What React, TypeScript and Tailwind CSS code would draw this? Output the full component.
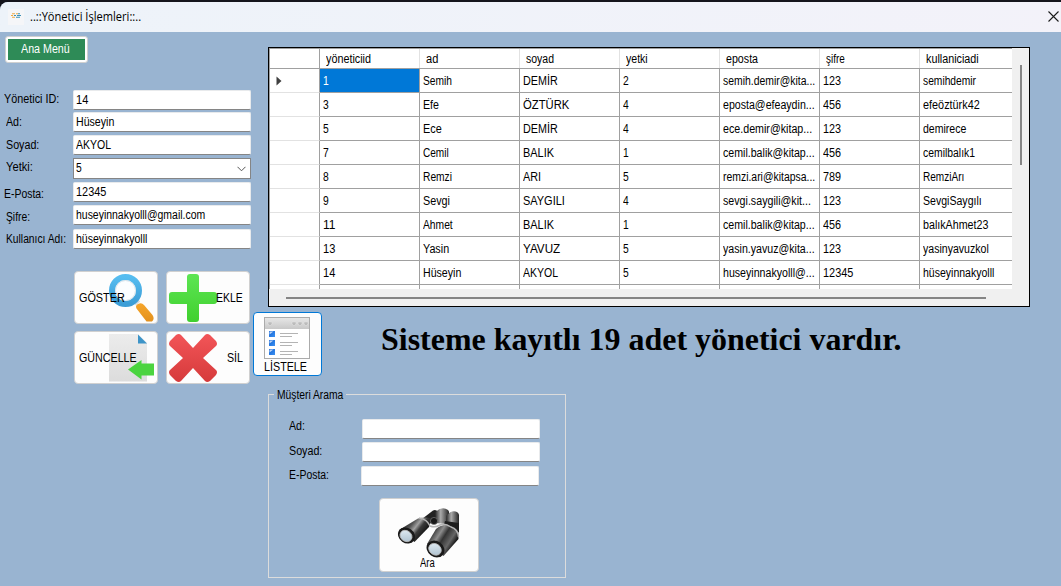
import { useLayoutEffect, useRef, useState } from "react";

/** A label condensed horizontally so that it takes exactly `w` pixels. */
function Label({ w, children, className = "" }: { w: number; children: string; className?: string }) {
  const ref = useRef<HTMLSpanElement>(null);
  const [scale, setScale] = useState(1);
  useLayoutEffect(() => {
    if (ref.current) setScale(w / ref.current.offsetWidth);
  }, [w, children]);
  return (
    <span className={`block ${className}`} style={{ width: w }}>
      <span ref={ref} className="inline-block origin-left whitespace-pre" style={{ transform: `scaleX(${scale})` }}>
        {children}
      </span>
    </span>
  );
}

type Text = [string, number];

const fields: { label: Text; value: Text; labelClass: string; rowClass: string; combo?: boolean }[] = [
  { label: ["Yönetici ID:", 55], value: ["14", 12], labelClass: "pl-1 -mt-px", rowClass: "h-[22px]" },
  { label: ["Ad:", 16], value: ["Hüseyin", 38], labelClass: "pl-1.5", rowClass: "h-[23px]" },
  { label: ["Soyad:", 33], value: ["AKYOL", 35], labelClass: "pl-1.5", rowClass: "h-[23px]" },
  { label: ["Yetki:", 27], value: ["5", 6], labelClass: "pl-1.5 -mt-px", rowClass: "h-6", combo: true },
  { label: ["E-Posta:", 40], value: ["12345", 30], labelClass: "pl-1 mt-0.5", rowClass: "h-[23px]" },
  { label: ["Şifre:", 24], value: ["huseyinnakyolll@gmail.com", 129], labelClass: "pl-1.5 mt-0.5", rowClass: "h-6" },
  { label: ["Kullanıcı Adı:", 60], value: ["hüseyinnakyolll", 71], labelClass: "pl-1.5", rowClass: "h-5" },
];

const headers: Text[] = [
  ["yöneticiid", 45], ["ad", 12], ["soyad", 28], ["yetki", 22], ["eposta", 32], ["şifre", 19], ["kullaniciadi", 53],
];

const rows: Text[][] = [
  [["1", 6], ["Semih", 29], ["DEMİR", 35], ["2", 6], ["semih.demir@kita...", 92], ["123", 18], ["semihdemir", 53]],
  [["3", 6], ["Efe", 16], ["ÖZTÜRK", 46], ["4", 6], ["eposta@efeaydin...", 92], ["456", 18], ["efeöztürk42", 57]],
  [["5", 6], ["Ece", 19], ["DEMİR", 35], ["4", 6], ["ece.demir@kitap...", 89], ["123", 18], ["demirece", 43]],
  [["7", 6], ["Cemil", 26], ["BALIK", 31], ["1", 6], ["cemil.balik@kitap...", 92], ["456", 18], ["cemilbalık1", 52]],
  [["8", 6], ["Remzi", 29], ["ARI", 18], ["5", 6], ["remzi.ari@kitapsa...", 92], ["789", 18], ["RemziArı", 41]],
  [["9", 6], ["Sevgi", 27], ["SAYGILI", 42], ["4", 6], ["sevgi.saygili@kit...", 88], ["123", 18], ["SevgiSaygılı", 59]],
  [["11", 12], ["Ahmet", 30], ["BALIK", 31], ["1", 6], ["cemil.balik@kitap...", 92], ["456", 18], ["balıkAhmet23", 65]],
  [["13", 12], ["Yasin", 26], ["YAVUZ", 37], ["5", 6], ["yasin.yavuz@kita...", 92], ["123", 18], ["yasinyavuzkol", 66]],
  [["14", 12], ["Hüseyin", 38], ["AKYOL", 35], ["5", 6], ["huseyinnakyolll@...", 92], ["12345", 30], ["hüseyinnakyolll", 71]],
];

const gridCols = "grid grid-cols-[50px_100px_100px_100px_100px_100px_100px_100px]";
const inputBox = "h-5 rounded-[2px] border border-[#e8eaec] border-b-[#858585] bg-white";
const buttonBox = "rounded-[4px] border border-[#d0d0d0] bg-[#fdfdfd]";

function Magnifier() {
  return (
    <svg className="absolute left-[34px] top-[2px]" width="45" height="48" viewBox="0 0 45 48">
      <defs>
        <linearGradient id="lens" x1="0" y1="0" x2="0" y2="1">
          <stop offset="0" stopColor="#56bdf0" />
          <stop offset="1" stopColor="#3c9dd6" />
        </linearGradient>
        <linearGradient id="grip" x1="0" y1="0" x2="0" y2="1">
          <stop offset="0" stopColor="#f6a62b" />
          <stop offset="1" stopColor="#e3911e" />
        </linearGradient>
      </defs>
      <path d="M26 26.500L29 29.500" stroke="#d8dcdf" strokeWidth="6" />
      <circle cx="16.500" cy="16.500" r="13.500" fill="#fcfeff" stroke="url(#lens)" strokeWidth="6" />
      <circle cx="16.500" cy="16.500" r="10" fill="none" stroke="#d7e3ea" strokeWidth="1" />
      <path d="M27.500 34.500Q26 31 29 30Q32.500 28 35 31L43.500 41Q46 45 43 47.500H37.500Z" fill="url(#grip)" />
    </svg>
  );
}

function Plus() {
  return (
    <svg className="absolute left-[2px] top-[2px]" width="48" height="48" viewBox="0 0 48 48">
      <defs>
        <linearGradient id="plus" x1="0" y1="0" x2="0" y2="1">
          <stop offset="0" stopColor="#5de553" />
          <stop offset="1" stopColor="#40d02f" />
        </linearGradient>
      </defs>
      <path d="M21 0h6q3 0 3 3v15h15q3 0 3 3v6q0 3-3 3H30v15q0 3-3 3h-6q-3 0-3-3V30H3q-3 0-3-3v-6q0-3 3-3h15V3q0-3 3-3z" fill="url(#plus)" />
    </svg>
  );
}

function PageArrow() {
  return (
    <svg className="absolute left-[34px] top-[2px]" width="45" height="48" viewBox="0 0 45 48">
      <defs>
        <linearGradient id="sheet" x1="0" y1="0" x2="0" y2="1">
          <stop offset="0" stopColor="#ececec" />
          <stop offset="1" stopColor="#dcdcdc" />
        </linearGradient>
      </defs>
      <path d="M0 0H29L38 9V47.500H0Z" fill="url(#sheet)" />
      <path d="M29 .5L38 9.500H29Z" fill="#3d94c8" />
      <path d="M19 35.500L32.500 26V29.500H45V41.500H32.500V45.500Z" fill="#4bd43f" />
    </svg>
  );
}

function Cross() {
  return (
    <svg className="absolute left-[2px] top-[2px]" width="48" height="48" viewBox="0 0 48 48">
      <defs>
        <linearGradient id="cross" x1="0" y1="0" x2="0" y2="1">
          <stop offset="0" stopColor="#f25558" />
          <stop offset="1" stopColor="#d63a3b" />
        </linearGradient>
      </defs>
      <path d="M7 1q3-2 5 0l12 13L36 1q2-2 5 0l6 6q2 3 0 5L34 24l13 12q2 2 0 5l-6 6q-3 2-5 0L24 34 12 47q-2 2-5 0l-6-6q-2-3 0-5l13-12L1 12q-2-2 0-5z" fill="url(#cross)" />
    </svg>
  );
}

function ListIcon() {
  return (
    <svg className="ml-[9px] block" width="48" height="44" viewBox="0 0 48 44">
      <defs>
        <linearGradient id="bar" x1="0" y1="0" x2="0" y2="1">
          <stop offset="0" stopColor="#e6e6e6" />
          <stop offset="1" stopColor="#c8c8c8" />
        </linearGradient>
        <linearGradient id="tick" x1="0" y1="0" x2="1" y2="1">
          <stop offset="0" stopColor="#1263d3" />
          <stop offset="1" stopColor="#3d91f2" />
        </linearGradient>
      </defs>
      <rect x="1.500" y="1.500" width="45" height="41" fill="#fff" stroke="#ababab" />
      <rect x="2" y="2" width="44" height="11" fill="url(#bar)" />
      {[7, 31, 37, 43].map((x) => (
        <path key={x} d={`M${x - 2} 6h4v2l-2 2-2-2z`} fill="#bcbcbc" stroke="#e5e5e5" strokeWidth=".5" />
      ))}
      {[15, 24, 33].map((y) => (
        <g key={y}>
          <rect x="6" y={y} width="6" height="6" fill="url(#tick)" />
          <path d={`M6.500 ${y + 0.5}h4l-4 3z`} fill="#fff" opacity=".7" />
          <path d={`M17 ${y + 2.5}h18`} stroke="#b4b4b4" />
          <path d={`M17 ${y + 5.5}h12`} stroke="#b4b4b4" />
        </g>
      ))}
    </svg>
  );
}

function Binoculars() {
  return (
    <svg className="ml-[17px] block" width="66" height="60" viewBox="0 0 66 60">
      <defs>
        <linearGradient id="barrel" gradientUnits="userSpaceOnUse" x1="5" y1="27" x2="23" y2="41">
          <stop offset="0" stopColor="#222" />
          <stop offset=".3" stopColor="#555" />
          <stop offset=".5" stopColor="#a0a0a0" />
          <stop offset=".68" stopColor="#3a3a3a" />
          <stop offset="1" stopColor="#111" />
        </linearGradient>
        <linearGradient id="barrel2" gradientUnits="userSpaceOnUse" x1="34" y1="34" x2="56" y2="48">
          <stop offset="0" stopColor="#2a2a2a" />
          <stop offset=".3" stopColor="#8d8d8d" />
          <stop offset=".5" stopColor="#333" />
          <stop offset=".78" stopColor="#666" />
          <stop offset="1" stopColor="#111" />
        </linearGradient>
        <linearGradient id="cap" x1="0" y1="0" x2="1" y2="0">
          <stop offset="0" stopColor="#222" />
          <stop offset=".4" stopColor="#aaa" />
          <stop offset="1" stopColor="#222" />
        </linearGradient>
        <linearGradient id="glass" x1="0" y1="0" x2="1" y2="1">
          <stop offset="0" stopColor="#e6f0f7" />
          <stop offset="1" stopColor="#a7bccb" />
        </linearGradient>
      </defs>
      <path d="M25 20L36 11.500Q39 10 41 13L41 21L32 25Z" fill="#222" />
      <path d="M38 13.500Q45 6.500 51 11Q53 13 51.500 17L49 25L39 24Z" fill="url(#cap)" />
      <path d="M49.500 16.500Q55 10.500 60 13Q62.500 14.500 62 18V31L49 27Z" fill="url(#cap)" />
      <path d="M2 31L21 19.500Q28 17.500 34 19.500L32 28L17.500 43Z" fill="url(#barrel)" />
      <path d="M30 45L39 30Q44 25.500 50 26L60 29Q62 34 61.500 40L46.500 57Z" fill="url(#barrel2)" />
      <path d="M48 22L62 24V34Q56 26 47 26Z" fill="#1c1c1c" />
      <path d="M22 19Q30 20 33 27Q38 29 43 26Q48 24 54 28Q61 30 61.500 38" fill="none" stroke="#b5b5b5" strokeWidth="1.500" />
      <circle cx="37" cy="22" r="3.600" fill="#181818" stroke="#777" strokeWidth=".7" />
      <ellipse cx="9.500" cy="36.500" rx="9" ry="7.500" transform="rotate(35 9.500 36.500)" fill="#191919" />
      <ellipse cx="9" cy="37" rx="6.300" ry="5.300" transform="rotate(35 9 37)" fill="url(#glass)" stroke="#bbb" strokeWidth=".8" />
      <ellipse cx="38.500" cy="50" rx="9.500" ry="7.800" transform="rotate(35 38.500 50)" fill="#191919" />
      <ellipse cx="38" cy="50.300" rx="6.600" ry="5.500" transform="rotate(35 38 50.300)" fill="url(#glass)" stroke="#bbb" strokeWidth=".8" />
    </svg>
  );
}

function EditForm() {
  return (
    <div className="mt-[27px]">
      {fields.map(({ label, value, labelClass, rowClass, combo }) => (
        <div key={label[0]} className={`flex ${rowClass}`}>
          <div className={`flex h-5 w-[73px] items-center ${labelClass}`}>
            <Label w={label[1]}>{label[0]}</Label>
          </div>
          {combo ? (
            <div className="flex h-[21px] w-[178px] items-center justify-between border border-[#858585] bg-white pb-px pl-0.5 pr-1">
              <Label w={value[1]}>{value[0]}</Label>
              <svg className="mt-0.5" width="9" height="6" viewBox="0 0 9 6">
                <path d="M.5 .8L4.500 4.800L8.500 .8" fill="none" stroke="#555" />
              </svg>
            </div>
          ) : (
            <div className={`flex w-[178px] items-center pl-0.5 ${inputBox}`}>
              <Label w={value[1]}>{value[0]}</Label>
            </div>
          )}
        </div>
      ))}
    </div>
  );
}

function ActionButtons() {
  const box = `relative h-[53px] w-[84px] ${buttonBox}`;
  return (
    <div className="ml-[74px] mt-[22px] grid w-[176px] grid-cols-2 gap-x-2 gap-y-[7px]">
      <button className={box}>
        <Magnifier />
        <Label w={46} className="relative ml-1 text-left">GÖSTER</Label>
      </button>
      <button className={box}>
        <Plus />
        <Label w={27} className="relative ml-[49px] text-left">EKLE</Label>
      </button>
      <button className={box}>
        <PageArrow />
        <Label w={58} className="relative ml-1 text-left">GÜNCELLE</Label>
      </button>
      <button className={box}>
        <Cross />
        <Label w={16} className="relative ml-[60px] text-left">SİL</Label>
      </button>
    </div>
  );
}

function DataGrid() {
  return (
    <div className="ml-[15px] mt-[15px] flex h-[260px] w-[762px] flex-col border border-black bg-[#f0f0f0]">
      <div className="flex">
        <div className="h-[241px] w-[743px] overflow-hidden border-l border-t border-[#a0a0a0] bg-white">
          <div className={`${gridCols} h-5 border-b border-[#a0a0a0]`}>
            <div className="-ml-px border-r border-[#a0a0a0]" />
            {headers.map(([t, w]) => (
              <div key={t} className="-ml-px flex items-center border-r border-[#e2e2e2] pl-[7px]">
                <Label w={w}>{t}</Label>
              </div>
            ))}
          </div>
          {rows.map((row, r) => (
            <div key={r} className={`${gridCols} h-6`}>
              <div className="-ml-px flex items-center border-b border-b-[#e2e2e2] border-r border-r-[#a0a0a0] pl-[7px]">
                {r === 0 && (
                  <svg width="6" height="10" viewBox="0 0 6 10">
                    <path d="M.5 .5L5.500 5L.5 9.500Z" fill="#404040" />
                  </svg>
                )}
              </div>
              {row.map(([t, w], c) => (
                <div
                  key={c}
                  className={`flex items-center border-b border-r border-[#a0a0a0] ${r === 0 && c === 0 ? "bg-[#0078d7] text-white" : ""} ${c === 0 ? "pl-[3px]" : "pl-[3px]"}`}
                >
                  <Label w={w}>{t}</Label>
                </div>
              ))}
            </div>
          ))}
          <div className={`${gridCols} h-[5px]`}>
            {[0, 1, 2, 3, 4, 5, 6, 7].map((c) => (
              <div key={c} className="-ml-px border-r border-[#a0a0a0]" />
            ))}
          </div>
        </div>
        <div className="pl-2 pt-[17px]">
          <div className="h-[100px] w-0.5 bg-[#858585]" />
        </div>
      </div>
      <div className="ml-[17px] mt-2 h-0.5 w-[700px] bg-[#858585]" />
    </div>
  );
}

function SearchBox() {
  const items: { label: Text; row: string; shift: string; input: string }[] = [
    { label: ["Ad:", 16], row: "h-[23px]", shift: "-mt-[3px]", input: "ml-[93px]" },
    { label: ["Soyad:", 33], row: "h-6", shift: "-mt-px", input: "ml-[93px]" },
    { label: ["E-Posta:", 40], row: "h-5", shift: "-mt-px", input: "ml-[92px]" },
  ];
  return (
    <fieldset className="ml-[15px] mt-[11px] h-[191px] w-[298px] border border-[#dcdcdc]">
      <legend className="ml-[5px] h-[15px] px-[3px] leading-[17px]">
        <Label w={66}>Müşteri Arama</Label>
      </legend>
      <div className="mt-[17px]">
        {items.map(({ label, row, shift, input }) => (
          <div key={label[0]} className={`flex ${row}`}>
            <div className={`flex h-5 w-0 items-center ${shift}`}>
              <Label w={label[1]} className="ml-5 shrink-0">{label[0]}</Label>
            </div>
            <div className={`w-[178px] ${inputBox} ${input}`} />
          </div>
        ))}
      </div>
      <button className={`ml-[110px] mt-3 flex h-[74px] w-[100px] flex-col ${buttonBox}`}>
        <Binoculars />
        <Label w={15} className="-mt-[3px] ml-10 text-left">Ara</Label>
      </button>
    </fieldset>
  );
}

export default function App() {
  return (
    <div className="h-[586px] w-[1061px] overflow-hidden bg-[#15151c] pt-0.5 font-['Liberation_Sans',Arial,sans-serif] text-[12px] leading-[14px] text-black">
      <div className="flex h-[584px] flex-col overflow-hidden rounded-tl-lg bg-[#99b4d1]">
        <header className="flex h-[30px] shrink-0 items-center bg-gradient-to-r from-[#edf3f9] to-[#f3f2f9] pl-2 pr-0.5">
          <svg width="16" height="16" viewBox="0 0 16 16">
            <rect width="16" height="16" fill="#f5f6f8" />
            <path d="M4 4.700h3M3 6.500h2M8 4.700h2M4 8.200h3" stroke="#edaa45" strokeWidth="1.100" />
            <path d="M6 6.500h2M9 6.500h4M8 8.200h4M10 4.700h2" stroke="#3a91b8" strokeWidth="1.100" />
          </svg>
          <Label w={111} className="ml-1.5 font-['Open_Sans',sans-serif]">..::Yönetici İşlemleri::..</Label>
          <svg className="-mt-0.5 ml-auto" width="11" height="11" viewBox="0 0 11 11">
            <path d="M.5 .5L10.500 10.500M10.500 .5L.5 10.500" stroke="#1b1b1b" strokeWidth="1.100" />
          </svg>
        </header>
        <main className="flex min-h-0 grow">
          <aside className="w-[253px] shrink-0">
            <button className="ml-[5px] mt-1 flex h-[27px] w-[83px] items-center rounded-[3px] border border-[#d0d0d0] bg-white p-0.5 text-white">
              <span className="flex h-full w-full items-center bg-[#2e8b57] pb-px pl-[13px] text-left">
                <Label w={49}>Ana Menü</Label>
              </span>
            </button>
            <EditForm />
            <ActionButtons />
          </aside>
          <section>
            <DataGrid />
            <div className="mt-[5px] flex h-16">
              <button className="flex h-16 w-[69px] flex-col rounded-[4px] border border-[#0078d7] bg-[#fdfdfd] pt-[3px]">
                <ListIcon />
                <Label w={43} className="ml-2.5 text-left">LİSTELE</Label>
              </button>
              <h1 className="ml-[59px] mt-[9px] font-['Liberation_Serif',serif] text-[32px] font-bold leading-[37px]">
                <Label w={520}>Sisteme kayıtlı 19 adet yönetici vardır.</Label>
              </h1>
            </div>
            <SearchBox />
          </section>
        </main>
      </div>
    </div>
  );
}
